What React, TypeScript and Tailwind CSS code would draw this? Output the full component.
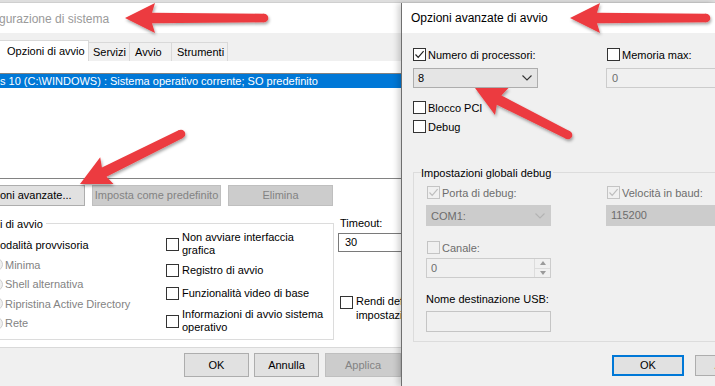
import React from "react";

type P = [number, number];

function arrowPoints(tail: P, tip: P, hl: number, hh: number): string {
  const dx = tail[0] - tip[0];
  const dy = tail[1] - tip[1];
  const len = Math.hypot(dx, dy);
  const ux = dx / len;
  const uy = dy / len;
  const nx = -uy;
  const ny = ux;
  const nk: P = [tip[0] + ux * hl, tip[1] + uy * hl];
  const notch: P = [nk[0] - ux * 3, nk[1] - uy * 3];
  const pts: P[] = [
    tip,
    [nk[0] + nx * hh, nk[1] + ny * hh],
    [notch[0] + nx * 5.2, notch[1] + ny * 5.2],
    [tail[0] + nx * 4.3, tail[1] + ny * 4.3],
    [tail[0] - nx * 4.3, tail[1] - ny * 4.3],
    [notch[0] - nx * 5.2, notch[1] - ny * 5.2],
    [nk[0] - nx * hh, nk[1] - ny * hh],
  ];
  return pts.map((p) => `${p[0].toFixed(1)},${p[1].toFixed(1)}`).join(" ");
}

const arrows: { tail: P; tip: P }[] = [
  { tail: [264, 18], tip: [125, 18] },
  { tail: [181, 134], tip: [80, 184] },
  { tail: [706, 18], tip: [570, 18] },
  { tail: [568, 135], tip: [475, 88] },
];

function Check({ checked = false, disabled = false }: { checked?: boolean; disabled?: boolean }) {
  return (
    <div
      className={
        "w-[13px] h-[13px] shrink-0 border flex items-center justify-center " +
        (disabled ? "border-[#c4c4c4] bg-[#f0f0f0]" : "border-[#333333] bg-white")
      }
    >
      {checked && (
        <svg width="11" height="11" viewBox="0 0 11 11">
          <path
            d="M1.5 5.5 L4.2 8.3 L9.6 2.2"
            fill="none"
            stroke={disabled ? "#bdbdbd" : "#222222"}
            strokeWidth="1.2"
          />
        </svg>
      )}
    </div>
  );
}

function Chevron({ color }: { color: string }) {
  return (
    <svg width="10" height="6" viewBox="0 0 10 6">
      <path d="M0.5 0.5 L5 5 L9.5 0.5" fill="none" stroke={color} strokeWidth="1.1" />
    </svg>
  );
}

export default function App() {
  return (
    <div className="w-[715px] h-[386px] overflow-hidden relative bg-[#f0f0f0] flex flex-col font-['Liberation_Sans',Arial,sans-serif] text-[11px] text-black leading-[14px]">
      <div className="h-[3px] shrink-0 bg-[#dedede] border-b border-[#cfcfcf]" />
      <div className="flex-1 flex min-h-0">
        {/* Left window: Configurazione di sistema */}
        <div className="w-[401px] shrink-0 flex flex-col overflow-hidden">
          <div className="h-[30px] shrink-0 bg-white flex items-center text-[12px] text-[#9a9a9a] -ml-px pt-[1px]">
            gurazione di sistema
          </div>
          <div className="flex-1 bg-[#f0f0f0] flex flex-col">
            <div className="mt-[7px] h-[21px] flex items-end">
              <div className="h-[21px] w-[89px] bg-white border-t border-r border-[#d9d9d9] pl-[7px] leading-[21px]">
                Opzioni di avvio
              </div>
              <div className="h-[19px] w-[41px] border-t border-r border-[#d9d9d9] pl-[4px] leading-[19px]">
                Servizi
              </div>
              <div className="h-[19px] w-[42px] border-t border-r border-[#d9d9d9] pl-[5px] leading-[19px]">
                Avvio
              </div>
              <div className="h-[19px] w-[56px] border-t border-r border-[#d9d9d9] pl-[5px] leading-[19px]">
                Strumenti
              </div>
            </div>
            <div className="h-[287px] bg-white border-b border-[#d9d9d9] flex flex-col pt-[12px]">
              <div className="h-[106px] border-y border-[#828282] bg-white">
                <div className="h-[14px] bg-[#0078d7] text-white leading-[14px] whitespace-nowrap">
                  s 10 (C:\WINDOWS) : Sistema operativo corrente; SO predefinito
                </div>
              </div>
              <div className="mt-[6px] flex h-[21px]">
                <div className="w-[85px] h-[21px] border border-l-0 border-[#adadad] bg-[#e1e1e1] text-right pr-[15px] leading-[19px] whitespace-nowrap">
                  oni avanzate...
                </div>
                <div className="ml-[7px] w-[129px] h-[21px] border border-[#bfbfbf] bg-[#cccccc] text-[#838383] text-center leading-[19px] whitespace-nowrap">
                  Imposta come predefinito
                </div>
                <div className="ml-[7px] w-[105px] h-[21px] border border-[#bfbfbf] bg-[#cccccc] text-[#838383] text-center leading-[19px]">
                  Elimina
                </div>
              </div>
              <div className="mt-[10px] flex items-start">
                <div className="mt-[7px] w-[334px] h-[117px] shrink-0 border-t border-r border-b border-[#dcdcdc] flex flex-col">
                  <div className="-mt-[7px] self-start bg-white pr-[3px] leading-[14px]">i di avvio</div>
                  <div className="flex">
                    <div className="w-[166px] shrink-0 flex flex-col mt-[7px] gap-[5.5px]">
                      <div className="h-[14px] whitespace-nowrap">odalità provvisoria</div>
                      {["Minima", "Shell alternativa", "Ripristina Active Directory", "Rete"].map((t) => (
                        <div key={t} className="h-[14px] flex items-center whitespace-nowrap text-[#838383]">
                          <div className="-ml-[10px] w-[13px] h-[13px] rounded-full border border-[#cdcdcd] bg-[#f0f0f0] shrink-0" />
                          <span className="ml-[2px]">{t}</span>
                        </div>
                      ))}
                    </div>
                    <div className="flex flex-col leading-[13px]">
                      <div className="flex items-center gap-[3px]">
                        <Check />
                        <div>
                          Non avviare interfaccia
                          <br />
                          grafica
                        </div>
                      </div>
                      <div className="mt-[7px] flex items-center gap-[3px]">
                        <Check />
                        <div>Registro di avvio</div>
                      </div>
                      <div className="mt-[10px] flex items-center gap-[3px]">
                        <Check />
                        <div>Funzionalità video di base</div>
                      </div>
                      <div className="mt-[8px] flex items-center gap-[3px]">
                        <Check />
                        <div>
                          Informazioni di avvio sistema
                          <br />
                          operativo
                        </div>
                      </div>
                    </div>
                  </div>
                </div>
                <div className="ml-[4px] flex flex-col">
                  <div className="pl-[2px] h-[14px]">Timeout:</div>
                  <div className="mt-[3px] w-[80px] h-[19px] border border-[#7a7a7a] bg-white pl-[6px] leading-[17px]">
                    30
                  </div>
                  <div className="mt-[42px] ml-[2px] flex items-start gap-[3px]">
                    <div className="mt-[2px]">
                      <Check />
                    </div>
                    <div className="whitespace-nowrap">
                      Rendi definitive
                      <br />
                      impostazioni
                    </div>
                  </div>
                </div>
              </div>
            </div>
            <div className="mt-[5px] flex">
              <div className="ml-[184px] w-[76px] h-[24px] border border-[#adadad] bg-[#e1e1e1] text-center leading-[22px]">
                OK
              </div>
              <div className="ml-[5px] w-[76px] h-[24px] border border-[#adadad] bg-[#e1e1e1] text-center leading-[22px]">
                Annulla
              </div>
              <div className="ml-[6px] w-[76px] h-[24px] shrink-0 border border-[#bfbfbf] bg-[#cccccc] text-[#838383] text-center leading-[22px]">
                Applica
              </div>
            </div>
          </div>
        </div>

        {/* Right window: Opzioni avanzate di avvio */}
        <div className="flex-1 min-w-0 flex flex-col border-l border-[#6f6f6f] shadow-[-3px_0_6px_rgba(0,0,0,0.18)] relative z-10 overflow-hidden">
          <div className="h-[30px] shrink-0 bg-white pl-[9px] flex items-center text-[12px] whitespace-nowrap">
            Opzioni avanzate di avvio
          </div>
          <div className="flex-1 bg-[#f0f0f0] pl-[11px] flex flex-col">
            <div className="mt-[15px] flex">
              <div className="w-[193px] shrink-0 flex flex-col">
                <div className="h-[13px] flex items-center gap-[2px]">
                  <Check checked />
                  <span className="whitespace-nowrap">Numero di processori:</span>
                </div>
                <div className="mt-[7px] w-[125px] h-[20px] border border-[#adadad] bg-[#e5e5e5] flex items-center justify-between pl-[4px] pr-[5px]">
                  <span>8</span>
                  <Chevron color="#333333" />
                </div>
              </div>
              <div className="flex flex-col">
                <div className="ml-px h-[13px] flex items-center gap-[2px]">
                  <Check />
                  <span className="whitespace-nowrap">Memoria max:</span>
                </div>
                <div className="mt-[7px] w-[130px] h-[20px] border border-[#cccccc] bg-[#f0f0f0] pl-[5px] leading-[18px] text-[#6d6d6d]">
                  0
                </div>
              </div>
            </div>
            <div className="mt-[13px] h-[13px] flex items-center gap-[2px]">
              <Check />
              <span>Blocco PCI</span>
            </div>
            <div className="mt-[6px] h-[13px] flex items-center gap-[2px]">
              <Check />
              <span>Debug</span>
            </div>
            <div className="mt-[39px] w-[330px] h-[170px] shrink-0 border-t border-l border-b border-[#dcdcdc] flex flex-col">
              <div className="-mt-[7px] ml-[7px] self-start bg-[#f0f0f0] pr-[2px] leading-[14px] whitespace-nowrap">
                Impostazioni globali debug
              </div>
              <div className="pl-[12px] flex flex-col">
                <div className="mt-[6px] flex text-[#6d6d6d]">
                  <div className="w-[180px] shrink-0 ml-px h-[13px] flex items-center gap-[2px]">
                    <Check checked disabled />
                    <span className="whitespace-nowrap">Porta di debug:</span>
                  </div>
                  <div className="h-[13px] flex items-center gap-[2px]">
                    <Check checked disabled />
                    <span className="whitespace-nowrap">Velocità in baud:</span>
                  </div>
                </div>
                <div className="mt-[6px] flex">
                  <div className="w-[125px] h-[21px] border border-[#cccccc] bg-[#cccccc] flex items-center justify-between pl-[4px] pr-[5px] text-[#6d6d6d]">
                    <span>COM1:</span>
                    <Chevron color="#b3b3b3" />
                  </div>
                  <div className="ml-[55px] w-[120px] h-[21px] border border-[#cccccc] bg-[#cccccc] pl-[4px] leading-[19px] text-[#6d6d6d]">
                    115200
                  </div>
                </div>
                <div className="mt-[15px] ml-px h-[13px] flex items-center gap-[2px] text-[#6d6d6d]">
                  <Check disabled />
                  <span>Canale:</span>
                </div>
                <div className="mt-[4px] w-[125px] h-[20px] border border-[#cccccc] bg-[#f0f0f0] flex">
                  <div className="flex-1 pl-[4px] leading-[18px] text-[#6d6d6d]">0</div>
                  <div className="w-[16px] flex flex-col border-l border-[#dcdcdc]">
                    <div className="flex-1 flex items-center justify-center border-b border-[#dcdcdc]">
                      <svg width="6" height="4" viewBox="0 0 6 4">
                        <path d="M0 4 L3 0 L6 4 Z" fill="#9a9a9a" />
                      </svg>
                    </div>
                    <div className="flex-1 flex items-center justify-center">
                      <svg width="6" height="4" viewBox="0 0 6 4">
                        <path d="M0 0 L3 4 L6 0 Z" fill="#9a9a9a" />
                      </svg>
                    </div>
                  </div>
                </div>
                <div className="mt-[14px] h-[14px] whitespace-nowrap">Nome destinazione USB:</div>
                <div className="mt-[5px] w-[125px] h-[21px] border border-[#c5c5c5] bg-[#f0f0f0]" />
              </div>
            </div>
            <div className="mt-[13px] flex">
              <div className="ml-[199px] w-[72px] h-[21px] shrink-0 border-2 border-[#0078d7] bg-[#e1e1e1] text-center leading-[17px]">
                OK
              </div>
              <div className="ml-[11px] w-[76px] h-[21px] shrink-0 border border-[#adadad] bg-[#e1e1e1] text-center leading-[19px]">
                Annulla
              </div>
            </div>
          </div>
        </div>
      </div>

      {/* Red annotation arrows */}
      <svg className="absolute inset-0 pointer-events-none z-20" width="715" height="386" viewBox="0 0 715 386">
        <defs>
          <filter id="ash" x="-20%" y="-50%" width="140%" height="200%">
            <feDropShadow dx="1" dy="2" stdDeviation="1.6" floodColor="#000" floodOpacity="0.35" />
          </filter>
        </defs>
        {arrows.map((a, i) => (
          <g key={i} filter="url(#ash)" fill="#ec3b3f">
            <polygon points={arrowPoints(a.tail, a.tip, 30, 15)} />
            <circle cx={a.tail[0]} cy={a.tail[1]} r="4.3" />
          </g>
        ))}
      </svg>
    </div>
  );
}
